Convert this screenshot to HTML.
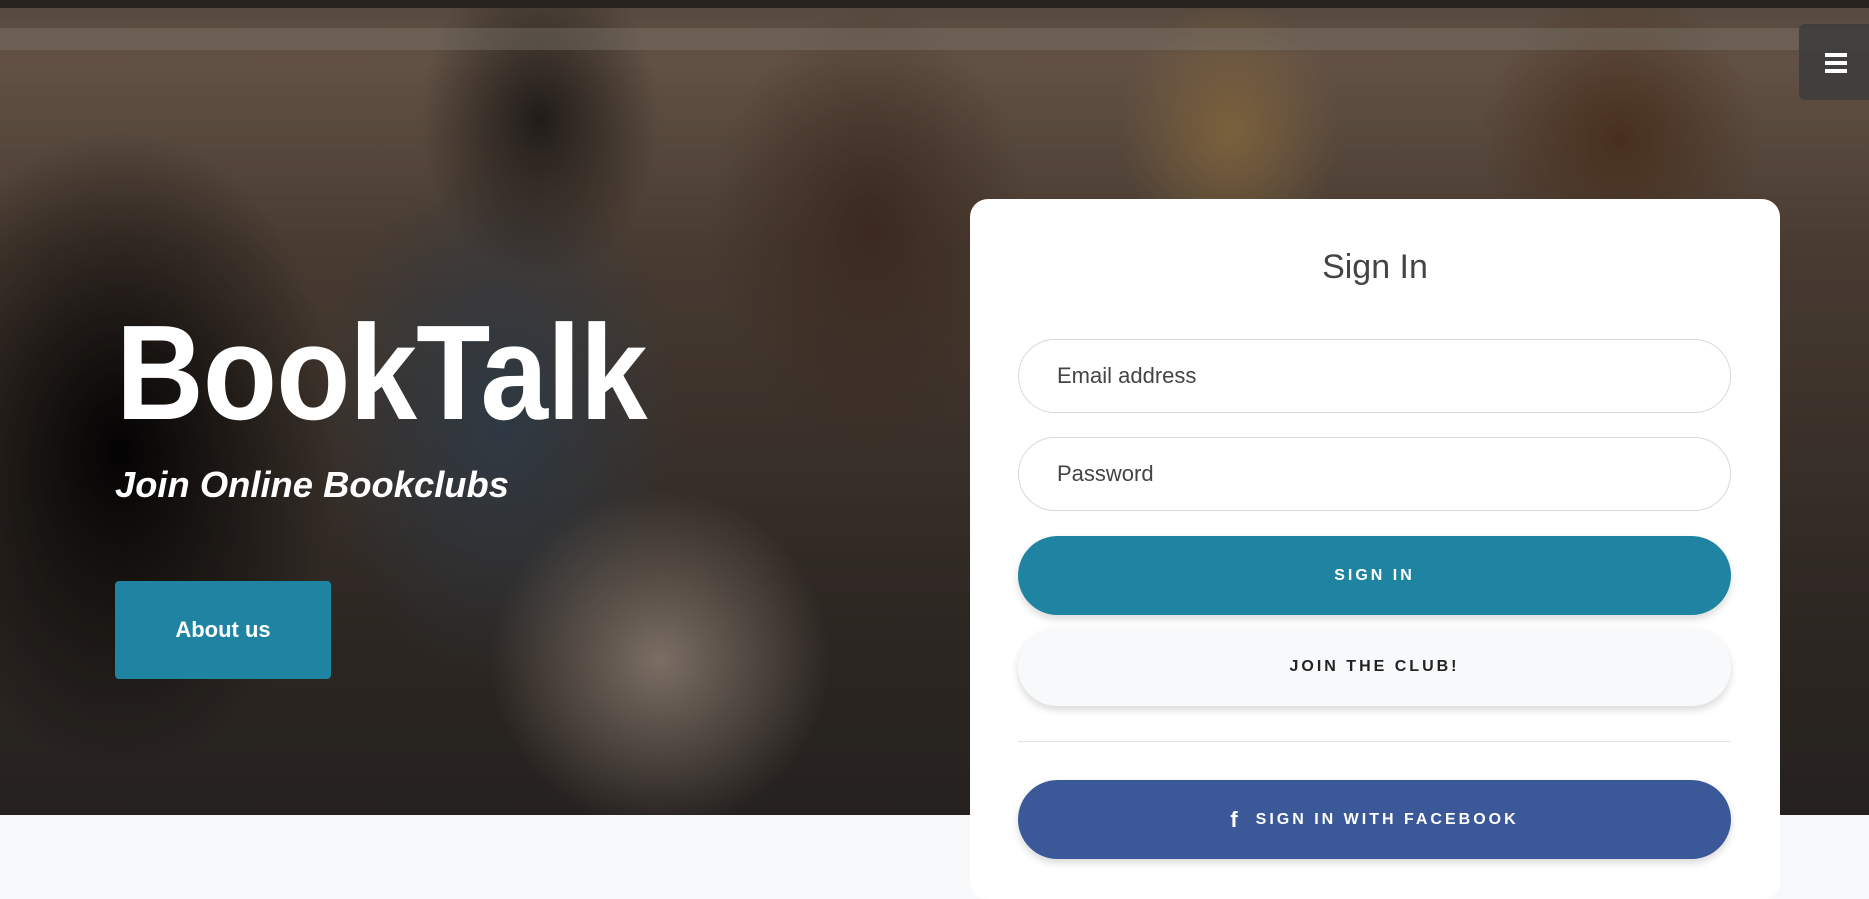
<!DOCTYPE html>
<html><head><meta charset="utf-8"><style>
*{box-sizing:border-box;margin:0;padding:0}
html,body{width:1869px;height:874px;overflow:hidden;background:#f8f9fa;font-family:"Liberation Sans",sans-serif}
.hero{position:absolute;left:0;top:0;width:1869px;height:815px;overflow:hidden;
background:
radial-gradient(ellipse 120px 160px at 540px 120px,#2a2420 0,transparent 100%),
radial-gradient(ellipse 160px 220px at 870px 230px,#4a3428 0,transparent 100%),
radial-gradient(ellipse 110px 130px at 1230px 130px,#9a7a4c 0,transparent 100%),
radial-gradient(ellipse 140px 150px at 1620px 140px,#5a3c26 0,transparent 100%),
radial-gradient(ellipse 220px 320px at 120px 450px,#050404 0,transparent 100%),
radial-gradient(ellipse 170px 170px at 660px 660px,#9a8a7e 0,transparent 100%),
radial-gradient(ellipse 180px 260px at 500px 420px,#3a4855 0,transparent 100%),
linear-gradient(180deg,#6a5a4c 0,#7b6656 60px,#5a4a3e 250px,#3a322c 600px,#2f2a27 815px)}
.top1{position:absolute;left:0;top:0;width:1869px;height:8px;background:#332c27}
.top2{position:absolute;left:0;top:28px;width:1869px;height:22px;background:rgba(170,160,150,.35)}
h1{position:absolute;left:116px;top:305px;font-size:135px;font-weight:bold;color:#fff;transform:scaleX(.9);transform-origin:left;line-height:1;letter-spacing:-1px}
h2{position:absolute;left:115px;top:464px;font-size:36px;font-style:italic;font-weight:bold;color:#fff;transform:scaleX(1.01);transform-origin:left}
.about{position:absolute;left:115px;top:581px;width:216px;height:98px;background:#1f84a2;border-radius:4px;color:#fff;font-weight:bold;font-size:22px;display:flex;align-items:center;justify-content:center}
.menu{position:absolute;left:1799px;top:24px;width:70px;height:76px;background:rgba(60,60,60,.85);border-radius:6px 0 0 6px}
.menu i{position:absolute;left:26px;width:22px;height:4px;background:#fff}
.card{position:absolute;left:970px;top:199px;width:810px;height:700px;background:#fff;border-radius:18px}
.title{position:absolute;width:810px;top:248px;text-align:center;font-size:34px;font-weight:normal;color:#444}
.inp{position:absolute;left:1018px;width:713px;height:74px;border:1px solid #d8d8d8;border-radius:37px;background:#fff;font-size:22px;color:#444;padding-left:38px;display:flex;align-items:center}
.btn{position:absolute;left:1018px;width:713px;border-radius:40px;display:flex;align-items:center;justify-content:center;font-weight:bold;font-size:16px;letter-spacing:3px;box-shadow:0 4px 8px rgba(0,0,0,.15)}
</style></head><body>
<div class="hero"><div class="top1"></div><div class="top2"></div>
<div style="position:absolute;inset:0;background:rgba(0,0,0,.2)"></div></div>
<h1>BookTalk</h1>
<h2>Join Online Bookclubs</h2>
<div class="about">About us</div>
<div class="menu"><i style="top:29px"></i><i style="top:37px"></i><i style="top:45px"></i></div>
<div class="card"></div>
<div class="title" style="left:970px">Sign In</div>
<div class="inp" style="top:339px">Email address</div>
<div class="inp" style="top:437px">Password</div>
<div class="btn" style="top:536px;height:79px;background:#1f84a2;color:#fff">SIGN IN</div>
<div class="btn" style="top:628px;height:78px;background:#f8f9fa;color:#222">JOIN THE CLUB!</div>
<div style="position:absolute;left:1018px;top:741px;width:713px;height:1px;background:#e3e3e3"></div>
<div class="btn" style="top:780px;height:79px;background:#3b5998;color:#fff"><span style="font-size:22px;margin-right:18px;letter-spacing:0">f</span>SIGN IN WITH FACEBOOK</div>
</body></html>
